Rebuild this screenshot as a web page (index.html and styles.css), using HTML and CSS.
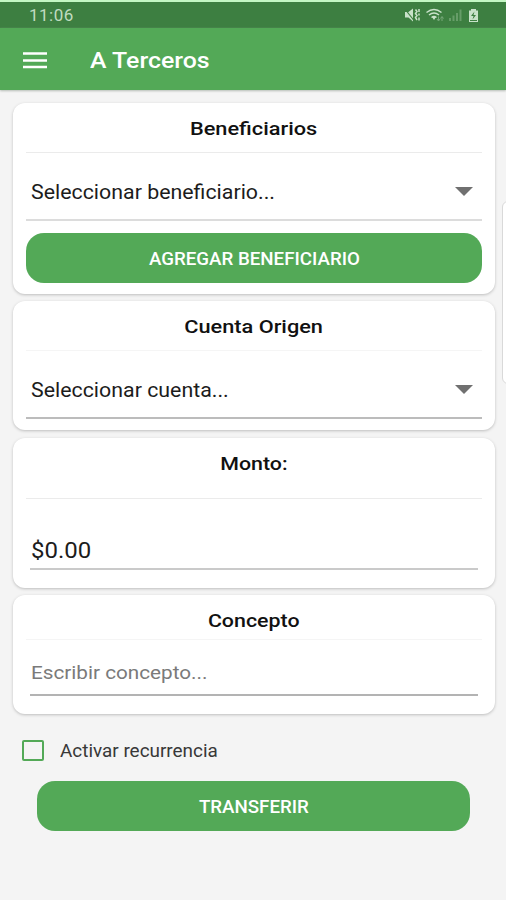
FILE: index.html
```html
<!DOCTYPE html>
<html lang="es">
<head>
<meta charset="utf-8">
<title>A Terceros</title>
<link rel="stylesheet" href="styles.css">
</head>
<body>
<div class="status">
  <span class="time">11:06</span>
  <svg class="status-icons" width="78" height="18" viewBox="0 0 78 18">
    <path class="solid" d="M0 5h3.500L8 1.500v13L3.500 10.500H0z"/>
    <path class="slash" d="M-.5 1.500l9.500 12"/>
    <path class="line" d="M10.500 2.500l1.500 2-1.500 2 1.500 2-1.500 2 1.500 2.500M14 2v3m0 1.500v2m0 2v3"/>
    <path class="line" d="M21.500 5.500q7.500-6 15 0M24 8q5-4 10 0M26.500 10.500q2.500-2 5 0"/>
    <path class="solid" d="M27 10h4L29 13z"/>
    <path class="faint" d="M33.500 13.500v-4m-1.500 2.500l1.500 2 1.500-2M37 10v4m-1.500-2.500l1.500-2 1.500 2"/>
    <path class="dim" d="M44 11h2v3h-2zM47.500 8.500h2V14h-2zM51 6h2v8h-2zM54.500 2.500h2V14h-2z"/>
    <path class="solid" d="M66 2h5v1.500h2V15h-9V3.500h2z"/>
    <path class="bolt" d="M69.500 4.500L66 9h2.500l-1 3.500L71 8h-2.500zM65 13h7v1h-7z"/>
  </svg>
</div>
<header class="bar">
  <svg class="menu" width="24" height="17" viewBox="0 0 24 17"><path d="M0 1.500h24M0 8.500h24M0 15h24"/></svg>
  <h1 class="title">A Terceros</h1>
</header>
<main class="content">
  <section class="card payee">
    <h2 class="heading"><span>Beneficiarios</span></h2>
    <div class="select"><span class="value">Seleccionar beneficiario...</span><svg width="18" height="9" viewBox="0 0 18 9"><path d="M0 0h18L9 9z"/></svg></div>
    <button class="button"><span>AGREGAR BENEFICIARIO</span></button>
  </section>
  <section class="card source">
    <h2 class="heading"><span>Cuenta Origen</span></h2>
    <div class="select"><span class="value">Seleccionar cuenta...</span><svg width="18" height="9" viewBox="0 0 18 9"><path d="M0 0h18L9 9z"/></svg></div>
  </section>
  <section class="card amount">
    <h2 class="heading"><span>Monto:</span></h2>
    <div class="field"><span>$0.00</span></div>
  </section>
  <section class="card concept">
    <h2 class="heading"><span>Concepto</span></h2>
    <div class="field"><span>Escribir concepto...</span></div>
  </section>
  <label class="check"><span class="box"></span><span class="check-text">Activar recurrencia</span></label>
  <button class="button send"><span>TRANSFERIR</span></button>
</main>
<div class="edge"></div>
</body>
</html>
```
FILE: styles.css
```css
* { box-sizing: border-box; }
body {
  position: relative;
  margin: 0;
  height: 900px;
  overflow: hidden;
  background: #f4f4f4;
  color: #1c1c1c;
  font-family: Roboto, sans-serif;
}
.status {
  display: flex;
  justify-content: space-between;
  height: 28px;
  padding: 5px 23px 0 29px;
  border-top: 2px solid #c3f7c3;
  background: #3d7f41;
}
.time { font-size: 17px; line-height: 17px; letter-spacing: .5px; color: #c0dcc0; }
.status-icons { overflow: visible; }
.solid { fill: #c9e2ca; }
.line { fill: none; stroke: #c9e2ca; stroke-width: 1.5; }
.slash { stroke: #3d7f41; stroke-width: 1.2; }
.faint { fill: none; stroke: #78a97b; stroke-width: 1; }
.dim { fill: #679d69; }
.bolt { fill: #3d7f41; }
.bar {
  display: flex;
  align-items: center;
  gap: 43px;
  height: 62px;
  padding: 2px 23px 0;
  background: #53a957;
  box-shadow: 0 1px 2px #b5bcb5;
}
.menu path { stroke: #fff; stroke-width: 2.7; }
.title {
  margin: 1px 0 0;
  font-size: 22px;
  font-weight: 500;
  line-height: 30px;
  color: #fff;
  transform: scaleX(1.13);
  transform-origin: left;
}
.content { display: flex; flex-direction: column; padding: 13px 11px 0 13px; }
.card {
  display: flex;
  flex-direction: column;
  padding: 0 13px;
  border-radius: 12px;
  background: #fff;
  box-shadow: 0 1px 3px #bdbdbd;
}
.payee { height: 191px; margin-bottom: 7px; }
.source { height: 129px; margin-bottom: 8px; }
.amount { height: 150px; margin-bottom: 7px; }
.concept { height: 119px; }
.heading {
  height: 50px;
  margin: 0;
  border-bottom: 1px solid #ebebeb;
  font-size: 19px;
  font-weight: 500;
  line-height: 51px;
  text-align: center;
  color: #111;
}
.heading span { display: inline-block; transform: scaleX(1.145); }
.source .heading { border-color: #f5f5f5; }
.amount .heading { height: 61px; }
.concept .heading { height: 45px; border-color: #f5f5f5; line-height: 52px; }
.amount .heading span, .concept .heading span { transform: scaleX(1.125); }
.select {
  display: flex;
  align-items: center;
  justify-content: space-between;
  height: 68px;
  padding: 12px 9px 0 5px;
  border-bottom: 2px solid #dcdcdc;
  font-size: 19.5px;
}
.source .select { border-color: #bcbcbc; }
.select svg { margin-bottom: 2px; fill: #707070; }
.value { transform: scaleX(1.095); transform-origin: left; }
.button {
  height: 50px;
  margin: 12px 0 0;
  padding: 2px 0 0;
  border: 0;
  border-radius: 18px;
  background: #53a957;
  color: #fff;
  font: 500 18px/48px Roboto, sans-serif;
}
.button span { display: inline-block; transform: scaleX(1.04); }
.field {
  display: flex;
  align-items: flex-end;
  margin: 0 4px;
  border-bottom: 2px solid #cacaca;
}
.field span { margin-left: 1px; transform: scaleX(1.09); transform-origin: left; }
.amount .field { height: 71px; font-size: 22px; line-height: 35px; }
.concept .field { height: 56px; border-color: #b3b3b3; color: #7a7a7a; font-size: 19px; line-height: 42px; }
.check {
  display: flex;
  align-items: center;
  gap: 16px;
  height: 24px;
  margin: 24px 0 0 9px;
  font-size: 17.5px;
  color: #383838;
}
.check-text { padding-top: 2px; transform: scaleX(1.08); transform-origin: left; }
.box { width: 22px; height: 21px; border: 2px solid #53a957; border-radius: 2px; }
.send { margin: 19px 25px 0 24px; }
.edge {
  position: absolute;
  top: 201px;
  right: -10px;
  width: 14px;
  height: 183px;
  border: 1px solid #d9d9d9;
  border-radius: 6px;
  background: #fff;
}
```
